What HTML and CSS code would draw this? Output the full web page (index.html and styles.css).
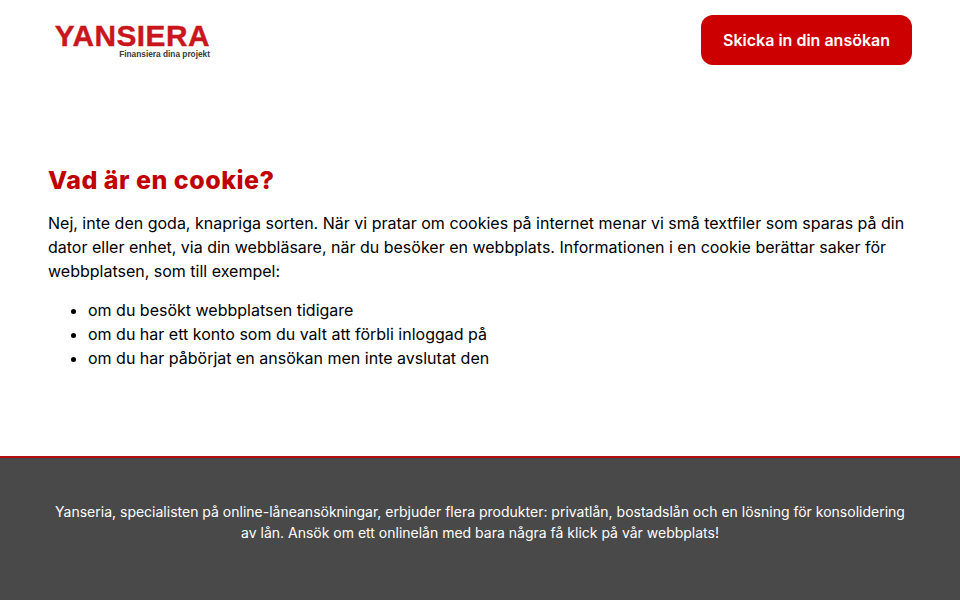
FILE: index.html
```html
<!DOCTYPE html>
<html lang="sv">
<head>
<meta charset="utf-8">
<title>Yansiera</title>
<link rel="stylesheet" href="styles.css">
</head>
<body>
<header class="site-header">
  <a class="logo" href="#">
    <span class="logo-name">YANSIERA</span>
    <span class="logo-tag">Finansiera dina projekt</span>
  </a>
  <a class="cta" href="#">Skicka in din ansökan</a>
</header>
<main class="content">
  <h1 class="title">Vad är en cookie?</h1>
  <p class="intro">Nej, inte den goda, knapriga sorten. När vi pratar om cookies på internet menar vi små textfiler som sparas på din dator eller enhet, via din webbläsare, när du besöker en webbplats. Informationen i en cookie berättar saker för webbplatsen, som till exempel:</p>
  <ul class="list">
    <li>om du besökt webbplatsen tidigare</li>
    <li>om du har ett konto som du valt att förbli inloggad på</li>
    <li>om du har påbörjat en ansökan men inte avslutat den</li>
  </ul>
</main>
<footer class="site-footer">
  <p class="footer-text">Yanseria, specialisten på online-låneansökningar, erbjuder flera produkter: privatlån, bostadslån och en lösning för konsolidering av lån. Ansök om ett onlinelån med bara några få klick på vår webbplats!</p>
</footer>
</body>
</html>
```
FILE: styles.css
```css
* { box-sizing: border-box; }
html, body { margin: 0; height: 100%; }
body {
  display: flex;
  flex-direction: column;
  height: 600px;
  overflow: hidden;
  background: #fff;
  color: #000;
  font-family: Inter, "Liberation Sans", sans-serif;
}
.site-header {
  display: flex;
  justify-content: space-between;
  align-items: center;
  height: 80px;
  padding: 0 48px 0 54px;
}
.logo {
  display: flex;
  flex-direction: column;
  gap: 3px;
  align-items: flex-end;
  width: 156px;
  margin-top: 2px;
  text-decoration: none;
}
.logo-name {
  font-family: "Liberation Sans", Arial, sans-serif;
  font-weight: 700;
  font-size: 29.8px;
  line-height: 22px;
  letter-spacing: 0.5px;
  -webkit-text-stroke: 0.4px #c9161c;
  color: #c9161c;
  white-space: nowrap;
}
.logo-tag {
  font-family: "Liberation Sans", Arial, sans-serif;
  font-weight: 700;
  font-size: 8.3px;
  line-height: 8px;
  color: #3a3a3a;
  white-space: nowrap;
}
.cta {
  display: flex;
  align-items: center;
  height: 50px;
  padding: 0 22px;
  background: #cc0000;
  border-radius: 12px;
  color: #fff;
  font-size: 16px;
  font-weight: 600;
  text-decoration: none;
}
.content {
  flex: 1;
  padding: 84px 48px 0;
}
.title {
  margin: 0 0 15px;
  color: #c00000;
  font-size: 25px;
  line-height: 32px;
  font-weight: 800;
  letter-spacing: 0.5px;
}
.intro {
  margin: 0 0 15px;
  font-size: 16px;
  line-height: 24px;
}
.list {
  margin: 0;
  padding-left: 40px;
  font-size: 16px;
  line-height: 24px;
}
.site-footer {
  height: 144px;
  padding: 43px 48px 0;
  background: #494949;
  border-top: 2px solid #b30d0d;
}
.footer-text {
  margin: 0;
  color: #fff;
  font-size: 14px;
  line-height: 21px;
  text-align: center;
}
```
